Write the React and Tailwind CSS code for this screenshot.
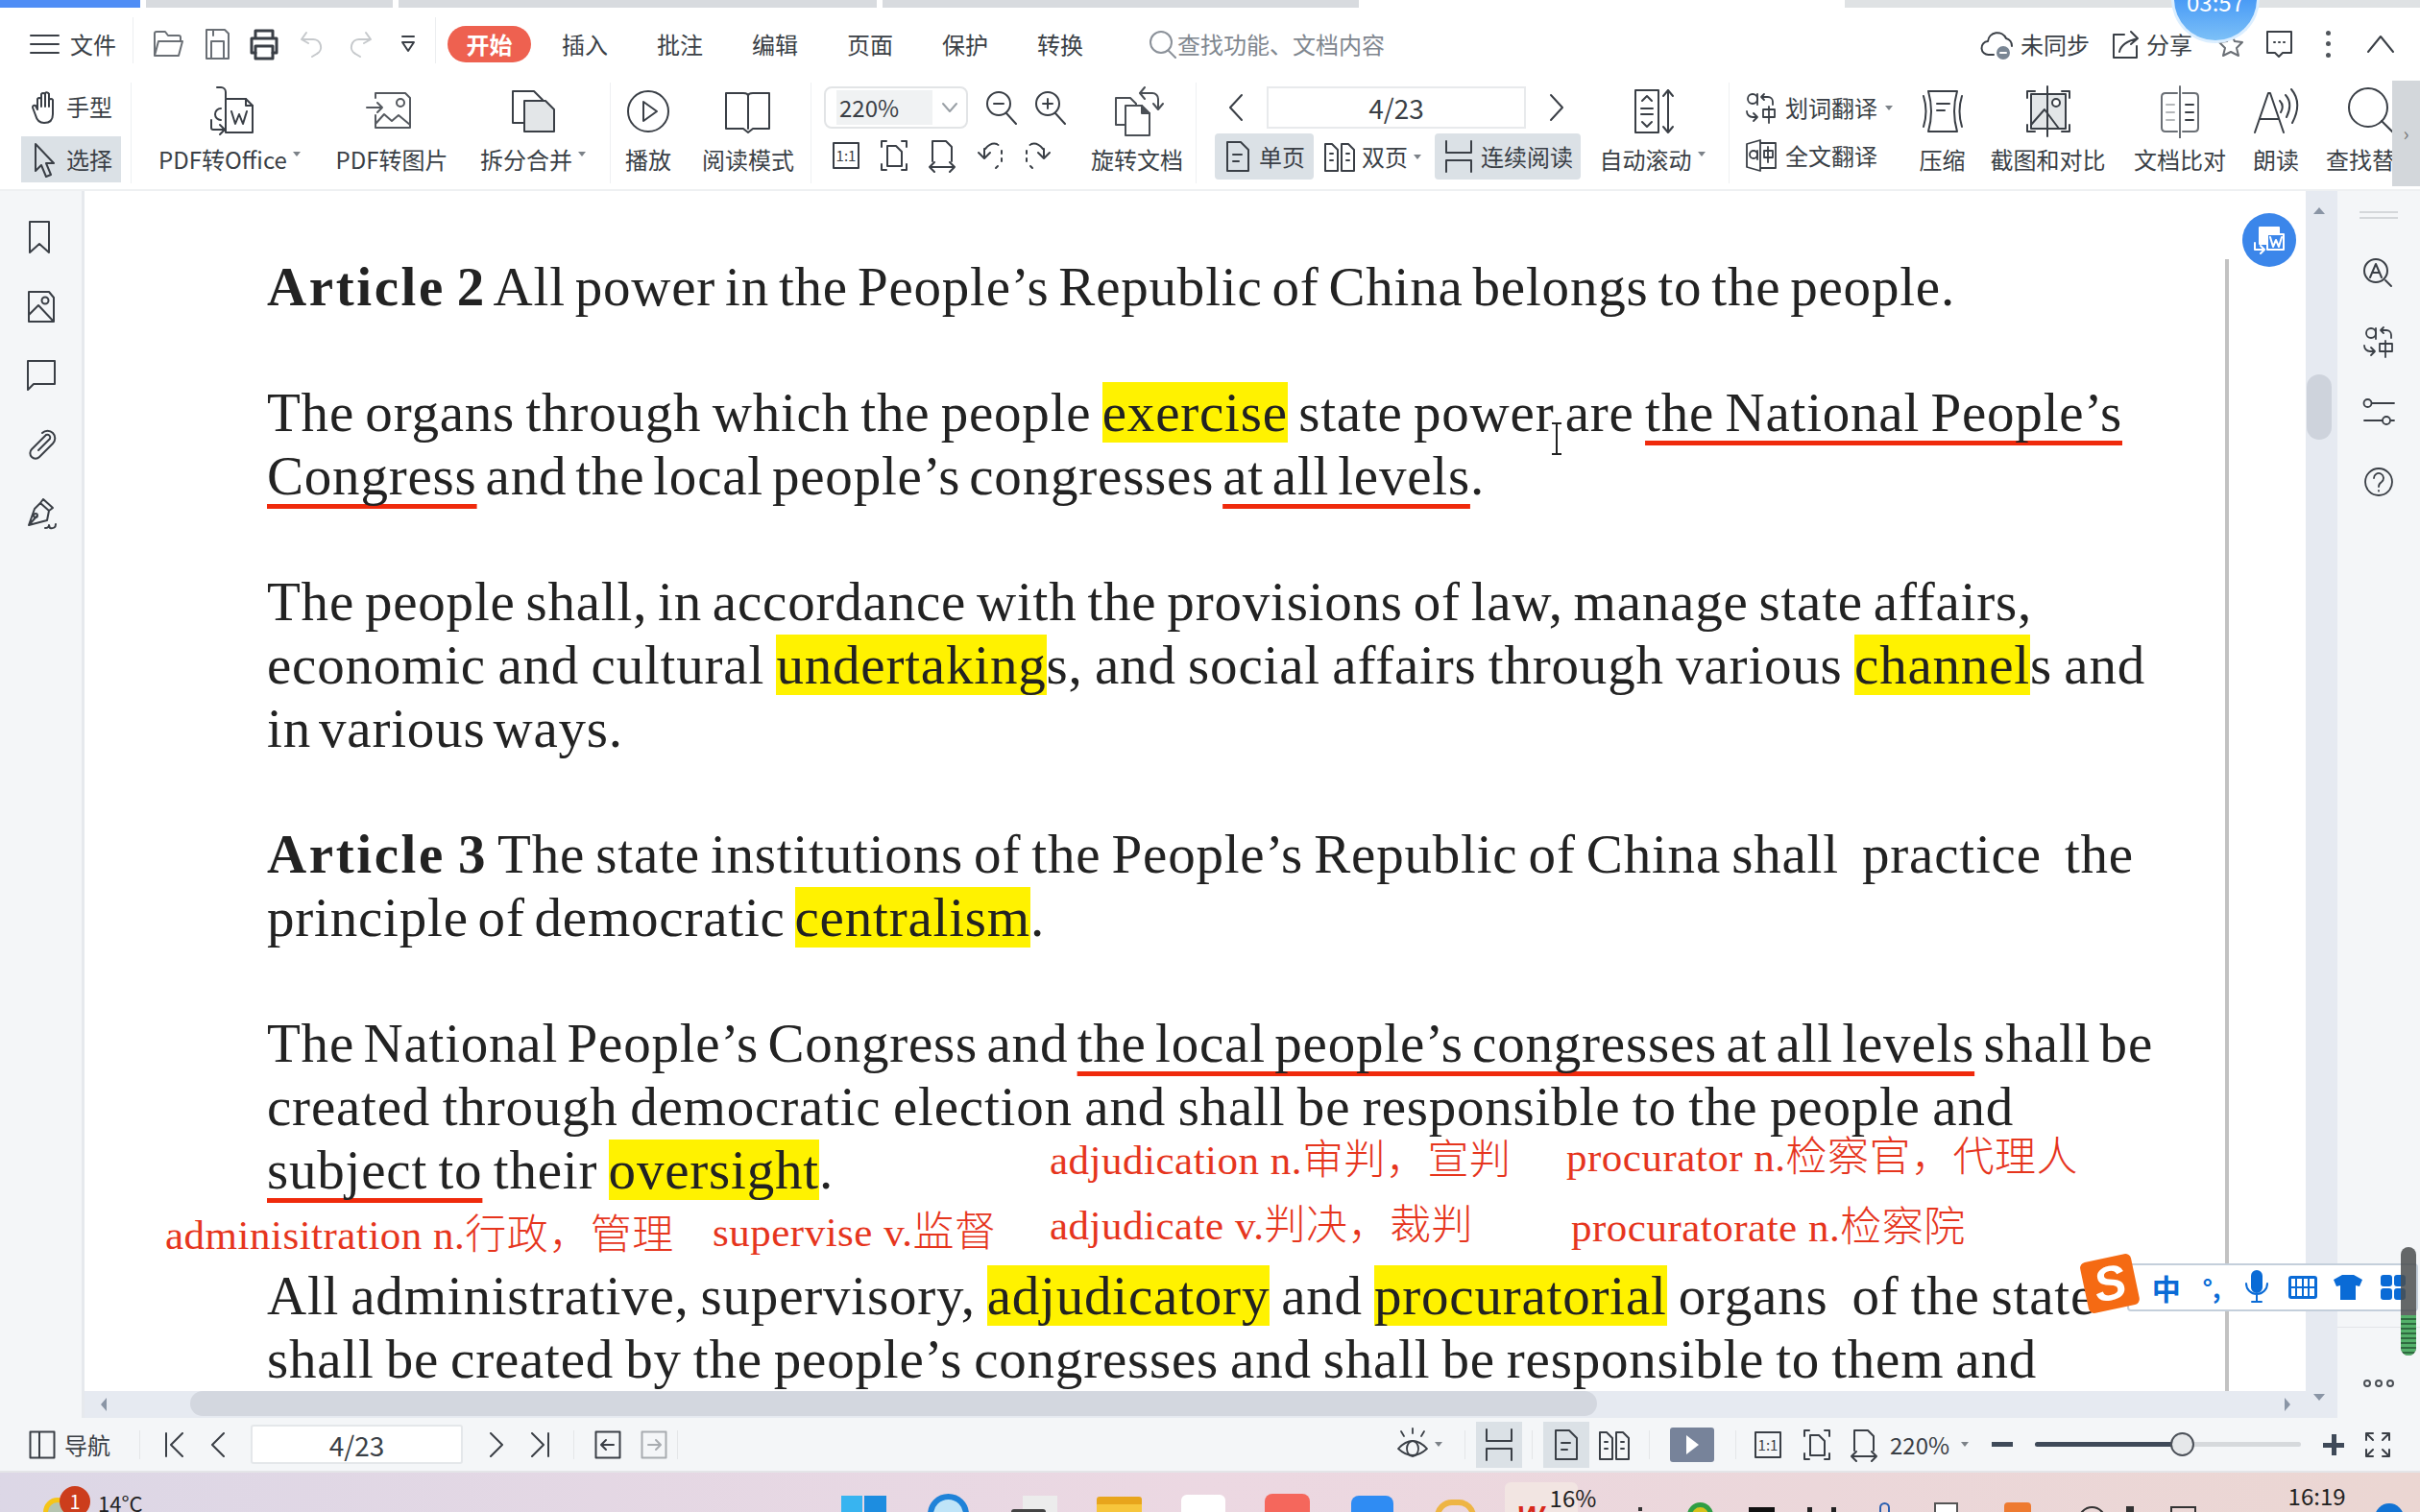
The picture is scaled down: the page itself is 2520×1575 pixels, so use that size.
import React from "react";

const ink = "#3a3f46";

const Ico = ({ w = 32, h = 32, sw = 2, color = ink, className = "", children }) => (
  <svg width={w} height={h} viewBox={`0 0 ${w} ${h}`} fill="none" stroke={color} strokeWidth={sw} strokeLinejoin="round" strokeLinecap="round" className={`shrink-0 ${className}`}>
    {children}
  </svg>
);

const Caret = ({ className = "" }) => (
  <span className={`inline-block w-0 h-0 border-x-[4px] border-x-transparent border-t-[5px] border-t-[#7c8288] ${className}`} />
);

const Divider = ({ className = "" }) => <div className={`w-px h-[105px] bg-[#eef0f2] shrink-0 ${className}`} />;

const SingleIcon = () => (
  <Ico w={28} h={34}><path d="M3 2h14l8 8v22H3z" /><path d="M9 15h9M9 22h6" /></Ico>
);
const DoubleIcon = () => (
  <Ico w={34} h={34}><path d="M2 4h7l6 6v22H2z" /><path d="M19 4h7l6 6v22H19z" /><path d="M7 14h3M7 21h3M24 14h3M24 21h3" /></Ico>
);
const ContinuousIcon = () => (
  <Ico w={30} h={34}><path d="M2 1v12h26V1M2 33V21h26v12" /></Ico>
);
const OneOne = () => (
  <Ico w={30} h={30}><rect x="2" y="2" width="26" height="26" /><text x="15" y="21" fontSize="15" textAnchor="middle" fill={ink} stroke="none" fontFamily="Noto Sans CJK SC">1:1</text></Ico>
);
const FitPage = () => (
  <Ico w={30} h={34}><path d="M2 8V2h5M23 2h5v6M2 26v6h5M23 32h5v-6" /><path d="M8 7h9l6 6v15H8z" /></Ico>
);
const FitWidth = () => (
  <Ico w={30} h={36}><path d="M5 24V3h14l6 6v15" /><path d="M2 30h26M7 25l-5 5 5 5M23 25l5 5-5 5" /></Ico>
);

// big toolbar icons, 56x56
const icons = {
  office: (
    <>
      <path d="M24 15h21l7 7v28H24z" /><path d="M45 15v7h7" /><path d="M30 28l4 13 4-10 4 10 4-13" />
      <path d="M15 3h4a5 5 0 0 1 5 5v6M19 25a6 6 0 0 0-6 6 6 6 0 0 0 6 6" /><path d="M9 37v8a2 2 0 0 0 2 2h11M18 42l5 5-5 5" />
    </>
  ),
  image: (
    <g stroke="#55595f">
      <path d="M11 14V9h31l5 5v31H11V32" /><path d="M2 24h16M13 19l5 5-5 5" /><circle cx="37" cy="19" r="4" /><path d="M11 41l9-10 8 7 7-6 12 10" />
    </g>
  ),
  split: (
    <>
      <path d="M7 7h22l9 9v24H7z" /><path d="M19 17h22l9 9v23H19z" fill="#e3e6e8" />
    </>
  ),
  play: (
    <>
      <circle cx="28" cy="28" r="21" /><path d="M23 18l14 10-14 10z" />
    </>
  ),
  book: <path d="M5 9h18q5 0 5 3q0-3 5-3h17v37H33l-5 4-5-4H5zM28 12v34" />,
  rotate: (
    <g stroke="#4a4f55">
      <path d="M8 16h15l6 6v22H8z" transform="translate(-2 -2)" /><path d="M16 22h17l8 8v23H16z" fill="#fff" /><path d="M33 22v8h8" fill="#4a4f55" />
      <path d="M32 9h12a6 6 0 0 1 6 6v10M36 3l-5 6 5 6M45 20l5 6 5-6" />
    </g>
  ),
  scroll: (
    <>
      <rect x="10" y="6" width="24" height="44" /><path d="M17 17l5-5 5 5M17 39l5 5 5-5M16 25h12M16 31h12" /><path d="M44 6v44M39 12l5-6 5 6M39 44l5 6 5-6" />
    </>
  ),
  compress: (
    <>
      <path d="M13 7h30q-6 21 0 42H13q6-21 0-42z" /><path d="M22 20h13M22 27h8" /><path d="M8 12q5 16 0 32M48 12q-5 16 0 32" />
    </>
  ),
  shot: (
    <>
      <path d="M6 14V7h8M42 7h8v7M6 42v7h8M42 49h8v-7" /><rect x="10" y="10" width="36" height="36" fill="#e3e6e8" /><circle cx="36" cy="19" r="4" fill="#fff" />
      <path d="M10 42l14-16 15 20" /><path d="M27 2v52" />
    </>
  ),
  compare: (
    <>
      <path d="M25 9H13q-4 0-4 4v32q0 4 4 4h12M31 9h12q4 0 4 4v32q0 4-4 4H31" stroke="#6a6f75" /><path d="M28 2v54" stroke="#6a6f75" />
      <path d="M14 21h8M14 29h8M14 37h8" stroke="#b4b7ba" /><path d="M34 21h8M34 29h8M34 37h8" />
    </>
  ),
  read: (
    <>
      <path d="M6 50L20 9h2l14 41M11 36h20" /><path d="M32 17q5 5 1 12M38 11q8 9 1 23M44 5q12 14 1 35" />
    </>
  ),
  find: (
    <>
      <circle cx="24" cy="24" r="20" /><path d="M38 38l14 14" />
    </>
  ),
};

const BigTool = ({ w, icon, label, caret }) => (
  <div className={`${w} shrink-0 flex flex-col items-center pt-[2px]`}>
    <div className="h-[56px] flex items-center justify-center">
      <Ico w={56} h={56}>{icons[icon]}</Ico>
    </div>
    <div className="h-[44px] flex items-center gap-[6px] text-[24px] text-[#3a3f46] whitespace-nowrap">
      {label}
      {caret && <Caret className="-mt-3" />}
    </div>
  </div>
);

const Hl = ({ children }) => <span className="bg-[#fff200]">{children}</span>;
const Ul = ({ children }) => (
  <span className="underline decoration-[#ef2a0c] decoration-[5px] underline-offset-[10px] [text-decoration-skip-ink:none]">{children}</span>
);
const Art = ({ children }) => <b className="tracking-[2.6px]">{children}</b>;
// the page has a few wider gaps where the justified text was stretched
const Gap = () => <span className="inline-block w-[13px]" />;

const Line = ({ w, children }) => (
  <div className={`${w} h-[65.7px] leading-[65.7px] whitespace-nowrap [text-align-last:justify]`}>{children}</div>
);
const Blank = () => <div className="h-[65.7px]" />;

const Note = ({ className, children }) => (
  <div className={`absolute whitespace-nowrap text-[43px] leading-[50px] tracking-[0.5px] font-light text-[#e6351d] font-['Liberation_Serif','Noto_Sans_CJK_SC',serif] ${className}`}>{children}</div>
);

const Tile = ({ className = "", children }) => <div className={`shrink-0 ${className}`}>{children}</div>;

export default function App() {
  return (
    <div className="relative w-[2520px] h-[1575px] overflow-hidden bg-white flex flex-col font-['Noto_Sans_CJK_SC',sans-serif] text-[#3a3f46]">
      {/* title tabs */}
      <div className="h-2 flex shrink-0">
        <div className="w-[146px] bg-[#4f8df5]" />
        <div className="w-[257px] ml-[6px] bg-[#d8dbdf]" />
        <div className="w-[498px] ml-[6px] bg-[#d8dbdf]" />
        <div className="w-[496px] ml-[6px] bg-[#d8dbdf]" />
        <div className="w-[599px] ml-[506px] bg-[#dfe2e4]" />
      </div>

      {/* menu row */}
      <div className="h-[78px] pb-[3px] flex items-center shrink-0 text-[24px]">
        <Ico w={32} h={24} className="ml-[31px]"><path d="M1 3h29M1 12h29M1 21h29" /></Ico>
        <span className="ml-[10px]">文件</span>
        <div className="w-px h-[48px] bg-[#eceef0] ml-[17px] -mt-2" />
        <Ico w={34} h={34} color="#6a6f75" className="ml-[19px]"><path d="M3 29V6q0-2 2-2h9l3 4h11q2 0 2 2v4M3 29l4-15h25l-4 15z" /></Ico>
        <Ico w={30} h={34} color="#6a6f75" className="ml-[19px]"><path d="M4 2h19l4 4v26H4z" /><path d="M9 14h13v18H9zM11 2v6" /></Ico>
        <Ico w={32} h={34} sw={3} className="ml-[18px]"><path d="M7 11V3h18v8M7 26H3V11h26v15h-4" /><rect x="7" y="19" width="18" height="13" /></Ico>
        <Ico w={26} h={30} color="#c6c9cc" className="ml-[21px]"><path d="M7 3L2 10l7 4M3 10h11a8 8 0 0 1 4 15l-5 3" /></Ico>
        <Ico w={26} h={30} color="#c6c9cc" className="ml-[24px]"><path d="M19 3l5 7-7 4M23 10H12a8 8 0 0 0-4 15l5 3" /></Ico>
        <Ico w={16} h={20} className="ml-[29px]"><path d="M2 2h12" /><path d="M2 8l6 9 6-9z" /></Ico>
        <div className="w-px h-[48px] bg-[#eceef0] ml-[20px] -mt-2" />
        <div className="ml-[12px] w-[87px] h-[38px] rounded-[19px] bg-[#ee6150] text-white font-bold flex items-center justify-center">开始</div>
        <span className="ml-[32px] whitespace-nowrap">插入</span>
        <span className="ml-[51px] whitespace-nowrap">批注</span>
        <span className="ml-[51px] whitespace-nowrap">编辑</span>
        <span className="ml-[51px] whitespace-nowrap">页面</span>
        <span className="ml-[51px] whitespace-nowrap">保护</span>
        <span className="ml-[51px] whitespace-nowrap">转换</span>
        <Ico w={30} h={30} color="#8b9199" className="ml-[68px]"><circle cx="13" cy="13" r="11" /><path d="M21 22l7 7" /></Ico>
        <span className="text-[#7f878f] whitespace-nowrap">查找功能、文档内容</span>
        <div className="flex-1" />
        <Ico w={36} h={36}>
          <path d="M14 29H9a7 7 0 0 1-1-14 10 10 0 0 1 19-3 8 8 0 0 1 6 8" />
          <circle cx="24" cy="27" r="8" fill="#7a8694" stroke="#fff" /><path d="M21 27h6" stroke="#fff" />
        </Ico>
        <span className="ml-[6px] whitespace-nowrap">未同步</span>
        <Ico w={30} h={32} className="ml-[22px]"><path d="M14 6H3v24h24V18M9 24q2-10 19-14M21 3l7 7-7 6" /></Ico>
        <span className="ml-[7px] whitespace-nowrap">分享</span>
        <Ico w={28} h={26} color="#6a6f75" className="ml-[26px]"><path d="M14 2l4 8 8 1-6 6 2 8-8-4-8 4 2-8-6-6 8-1z" /></Ico>
        <Ico w={28} h={32} className="ml-[22px]"><path d="M2 3h25v22h-9l-4 4-4-4H2z" /><path d="M9 14h1M14 14h1M19 14h1" /></Ico>
        <div className="ml-[35px] w-[4px] h-[28px] flex flex-col justify-between">
          <div className="w-[5px] h-[5px] rounded-full bg-[#50555b]" />
          <div className="w-[5px] h-[5px] rounded-full bg-[#50555b]" />
          <div className="w-[5px] h-[5px] rounded-full bg-[#50555b]" />
        </div>
        <Ico w={30} h={20} className="ml-[38px] mr-[26px]"><path d="M2 18L15 2l13 16" /></Ico>
      </div>

      {/* ribbon */}
      <div className="h-[111px] flex items-start shrink-0 border-b-2 border-[#eef0f2] box-content">
        <div className="w-[136px] shrink-0 pl-[22px] text-[24px]">
          <div className="h-[50px] flex items-center pl-[10px]">
            <Ico w={28} h={38}><path d="M7 22V11a2.500 2.500 0 0 1 4 0V6a2.500 2.500 0 0 1 4 0v-1a2.500 2.500 0 0 1 4 1v6a2.500 2.500 0 0 1 4 0v15q0 9-9 9-7 0-9-8l-3-8q0-3 3-2z" /><path d="M11 11v8M15 6v13M19 6v13" /></Ico>
            <span className="ml-[9px] whitespace-nowrap">手型</span>
          </div>
          <div className="w-[104px] h-[48px] mt-[6px] bg-[#dbe1e6] flex items-center pl-[12px]">
            <Ico w={26} h={38}><path d="M3 3l19 20h-8l5 12-5 2-5-12-6 6z" /></Ico>
            <span className="ml-[9px] whitespace-nowrap">选择</span>
          </div>
        </div>
        <Divider />
        <BigTool w="w-[204px]" icon="office" label="PDF转Office" caret />
        <BigTool w="w-[134px]" icon="image" label="PDF转图片" />
        <BigTool w="w-[160px]" icon="split" label="拆分合并" caret />
        <Divider />
        <BigTool w="w-[78px]" icon="play" label="播放" />
        <BigTool w="w-[130px]" icon="book" label="阅读模式" />
        <Divider />

        <div className="w-[283px] shrink-0 pl-[13px]">
          <div className="h-[44px] mt-[4px] flex items-center">
            <div className="w-[150px] h-[44px] border-2 border-[#e2e4e6] rounded-[8px] flex items-center">
              <div className="w-[100px] h-[36px] ml-[11px] pl-[3px] bg-[#f0f2f3] text-[24px] flex items-center">220%</div>
              <Ico w={18} h={12} color="#9aa0a6" className="ml-[9px]"><path d="M2 2l7 8 7-8" /></Ico>
            </div>
            <Ico w={36} h={36} className="ml-[17px]"><circle cx="15" cy="14" r="12" /><path d="M10 14h10M23 24l10 11" /></Ico>
            <Ico w={36} h={36} className="ml-[15px]"><circle cx="15" cy="14" r="12" /><path d="M10 14h10M15 9v10M23 24l10 11" /></Ico>
          </div>
          <div className="h-[44px] mt-[6px] flex items-center -ml-[2px]">
            <div className="w-[50px] flex justify-center"><OneOne /></div>
            <div className="w-[50px] flex justify-center"><FitPage /></div>
            <div className="w-[50px] flex justify-center"><FitWidth /></div>
            <div className="w-[50px] flex justify-center">
              <Ico w={30} h={34}><path d="M10 10q6-7 12-5M22 5l1.500 1M27 12v3M27 20v3M23 28l-2 2M9 10v9M3 14l6 6 6-6" /></Ico>
            </div>
            <div className="w-[50px] flex justify-center">
              <Ico w={30} h={34}><path d="M20 10q-6-7-12-5M8 5L6.500 6M3 12v3M3 20v3M7 28l2 2M21 10v9M15 14l6 6 6-6" /></Ico>
            </div>
          </div>
        </div>
        <BigTool w="w-[112px]" icon="rotate" label="旋转文档" />
        <Divider className="ml-[5px]" />

        <div className="w-[400px] shrink-0">
          <div className="h-[44px] mt-[4px] flex items-center">
            <Ico w={20} h={32} className="ml-[31px]"><path d="M16 3L4 16l12 13" /></Ico>
            <div className="w-[270px] h-[44px] ml-[22px] border-2 border-[#e8eaec] text-[28px] flex items-center justify-center">4/23</div>
            <Ico w={20} h={32} className="ml-[22px]"><path d="M4 3l12 13L4 29" /></Ico>
          </div>
          <div className="h-[48px] mt-[5px] flex items-center text-[24px]">
            <div className="w-[103px] h-[48px] ml-[19px] bg-[#dbe1e6] rounded-[4px] flex items-center pl-[10px] gap-[8px]"><SingleIcon /><span className="whitespace-nowrap">单页</span></div>
            <div className="w-[111px] h-[48px] ml-[8px] flex items-center pl-[2px] gap-[6px]"><DoubleIcon /><span className="whitespace-nowrap">双页</span><Caret /></div>
            <div className="w-[152px] h-[48px] ml-[7px] bg-[#dbe1e6] rounded-[4px] flex items-center pl-[10px] gap-[8px]"><ContinuousIcon /><span className="whitespace-nowrap">连续阅读</span></div>
          </div>
        </div>
        <BigTool w="w-[149px]" icon="scroll" label="自动滚动" caret />
        <Divider className="ml-[5px]" />

        <div className="w-[184px] shrink-0 pl-[16px] text-[24px]">
          <div className="h-[44px] mt-[4px] flex items-center">
            <Ico w={34} h={36} sw={1.8}>
              <circle cx="8" cy="9" r="5" /><path d="M13 4v11M20 4l-3 3 3 3M17 7h7a5 5 0 0 1 5 5v3" /><path d="M2 22a6 6 0 0 0 6 6h5M9 24l4 4-4 4" /><rect x="19" y="20" width="12" height="8" /><path d="M25 17v17" />
            </Ico>
            <span className="ml-[8px] whitespace-nowrap">划词翻译</span>
            <Caret className="ml-[8px]" />
          </div>
          <div className="h-[44px] mt-[6px] flex items-center">
            <Ico w={34} h={36} sw={1.8}>
              <path d="M16 2L2 6v24l14 4zM16 5h16v26H16" /><circle cx="9" cy="17" r="4" /><path d="M13 13v9" /><rect x="20" y="13" width="9" height="7" /><path d="M24 9v16" />
            </Ico>
            <span className="ml-[8px] whitespace-nowrap">全文翻译</span>
          </div>
        </div>
        <BigTool w="w-[75px]" icon="compress" label="压缩" />
        <BigTool w="w-[145px]" icon="shot" label="截图和对比" />
        <BigTool w="w-[130px]" icon="compare" label="文档比对" />
        <BigTool w="w-[70px]" icon="read" label="朗读" />
        <div className="w-[86px] shrink-0 overflow-hidden">
          <div className="w-[130px]"><BigTool w="w-[130px]" icon="find" label="查找替换" /></div>
        </div>
        <div className="w-[29px] h-[110px] bg-[#d3d7db] flex items-center justify-center text-[20px] text-[#777] -mt-[2px]">›</div>
      </div>

      {/* main */}
      <div className="flex-1 min-h-0 flex">
        <div className="w-[88px] shrink-0 bg-[#f4f6f8] border-r-[3px] border-[#e6e9ed] flex flex-col items-center pt-[30px] gap-[36px]">
          <Ico w={26} h={36} className="-ml-1"><path d="M3 2h20v32l-10-9-10 9z" /></Ico>
          <Ico w={32} h={36}><path d="M3 3h21l5 6v25H3z" /><circle cx="20" cy="12" r="3.500" /><path d="M3 27l10-10 15 16" /></Ico>
          <Ico w={34} h={36}><path d="M3 3h28v24H9l-6 6z" /></Ico>
          <Ico w={34} h={36}><path d="M14 24L26 12a3 3 0 0 0-4-4L7 23a5.500 5.500 0 0 0 8 8L29 17a7.500 7.500 0 0 0-11-11" /></Ico>
          <Ico w={34} h={36}><path d="M16 7l9 8-2 10-19 5 6-17zM19 3l-3 4 9 8 4-3zM4 30l8-9" /><circle cx="11" cy="20" r="2" /><path d="M21 33q4 0 4-3l1 3q6 1 6-4" /></Ico>
        </div>

        <div className="w-[2313px] shrink-0 flex flex-col">
          <div className="relative flex-1 min-h-0 overflow-hidden pl-[190px] pt-[67px] bg-white text-[#222] text-[57px] tracking-[0.8px] [word-spacing:-7px] font-['Liberation_Serif',serif]">
            <div className="absolute left-[2229px] top-[71px] bottom-0 w-[4px] bg-[#c2c2c2]" />
            <Line w="w-[1758px]"><Art>Article 2</Art> All power in the People’s Republic of China belongs to the people.</Line>
            <Blank />
            <Line w="w-[1932px]">The organs through which the people <Hl>exercise</Hl> state power are <Ul>the National People’s</Ul></Line>
            <Line w="w-[1268px]"><Ul>Congress</Ul> and the local people’s congresses <Ul>at all levels</Ul>.</Line>
            <Blank />
            <Line w="w-[1838px]">The people shall, in accordance with the provisions of law, manage state affairs,</Line>
            <Line w="w-[1956px]">economic and cultural <Hl>undertaking</Hl>s, and social affairs through various <Hl>channel</Hl>s and</Line>
            <Line w="w-[370px]">in various ways.</Line>
            <Blank />
            <Line w="w-[1944px]"><Art>Article 3</Art> The state institutions of the People’s Republic of China shall <Gap />practice <Gap />the</Line>
            <Line w="w-[810px]">principle of democratic <Hl>centralism</Hl>.</Line>
            <Blank />
            <Line w="w-[1964px]">The National People’s Congress and <Ul>the local people’s congresses at all levels</Ul> shall be</Line>
            <Line w="w-[1819px]">created through democratic election and shall be responsible to the people and</Line>
            <Line w="w-[590px]"><Ul>subject to</Ul> their <Hl>oversight</Hl>.</Line>
            <Blank />
            <Line w="w-[1904px]">All administrative, supervisory, <Hl>adjudicatory</Hl> and <Hl>procuratorial</Hl> organs <Gap />of the state</Line>
            <Line w="w-[1843px]">shall be created by the people’s congresses and shall be responsible to them and</Line>

            <div className="absolute left-[2247px] top-[23px] w-[56px] h-[56px] rounded-full bg-[#3b86ea] flex items-center justify-center">
              <Ico w={34} h={30} color="#fff" sw={2}>
                <path d="M7 2h20v6H14v11H7z" fill="#fff" /><rect x="15" y="9" width="17" height="16" /><path d="M18 12l3 10 3-7 3 7 3-10" /><path d="M2 18v7h9M8 21l4 4-4 4" />
              </Ico>
            </div>

            <svg width="14" height="34" viewBox="0 0 14 34" fill="none" stroke="#222" strokeWidth="2" className="absolute left-[1526px] top-[241px]">
              <path d="M2 1h10M7 1v32M2 33h10" />
            </svg>
          </div>
          {/* horizontal scrollbar */}
          <div className="h-[28px] shrink-0 bg-[#e6eaf1] flex items-center">
            <div className="ml-[17px] w-0 h-0 border-y-[7px] border-y-transparent border-r-[6px] border-r-[#8a95a5]" />
            <div className="ml-[87px] w-[1465px] h-[26px] -mt-[2px] rounded-[13px] bg-[#d3d7df]" />
            <div className="ml-[716px] w-0 h-0 border-y-[7px] border-y-transparent border-l-[6px] border-l-[#8a95a5]" />
          </div>
        </div>

        <div className="w-[33px] shrink-0 bg-[#e6eaf1] flex flex-col items-center pt-[17px]">
          <div className="w-0 h-0 border-x-[6px] border-x-transparent border-b-[7px] border-b-[#8a95a5] -ml-[6px]" />
          <div className="w-[26px] h-[68px] mt-[167px] rounded-[13px] bg-[#ced3dc] -ml-[6px]" />
          <div className="flex-1" />
          <div className="w-0 h-0 border-x-[6px] border-x-transparent border-t-[7px] border-t-[#8a95a5] -ml-[6px] mb-[18px]" />
        </div>

        <div className="w-[86px] shrink-0 bg-[#f4f6f8] flex flex-col items-center pt-[21px]">
          <div className="w-[40px] h-[8px] border-y-2 border-[#d4d7da]" />
          <Ico w={34} h={34} className="mt-[40px]"><circle cx="14" cy="14" r="12" /><path d="M8 21l6-14 6 14M10 16h8" /><path d="M24 24l6 6" /></Ico>
          <Ico w={34} h={36} className="mt-[36px]" sw={1.8}>
            <circle cx="9" cy="9" r="5" /><path d="M14 4v11M22 3l-3 3 3 3M19 6h6a5 5 0 0 1 5 5v3" /><path d="M2 22a6 6 0 0 0 6 6h5M9 24l4 4-4 4" /><rect x="18" y="20" width="13" height="8" /><path d="M24 17v17" />
          </Ico>
          <Ico w={34} h={30} className="mt-[40px]" sw={1.8}><circle cx="5.500" cy="6" r="4" /><path d="M10 6h23M2 24h19M30 24h3" /><circle cx="25" cy="24" r="4" /></Ico>
          <Ico w={32} h={32} className="mt-[42px]" sw={1.8}><circle cx="16" cy="16" r="14" /><path d="M11 12a5 5 0 1 1 8 4q-3 2-3 5M16 25v.5" /></Ico>
          <div className="flex-1" />
          <div className="w-full h-px bg-[#e2e5e8] mb-[54px]" />
          <div className="flex gap-[4px] mb-[32px]">
            <div className="w-[8px] h-[8px] rounded-full border-2 border-[#4a4f55]" />
            <div className="w-[8px] h-[8px] rounded-full border-2 border-[#4a4f55]" />
            <div className="w-[8px] h-[8px] rounded-full border-2 border-[#4a4f55]" />
          </div>
        </div>
      </div>

      {/* status bar */}
      <div className="h-[57px] shrink-0 bg-[#f4f6f8] border-b-2 border-[#e4e5e8] flex items-center text-[24px]">
        <Ico w={28} h={30} className="ml-[30px]"><rect x="1.500" y="1.500" width="25" height="27" /><path d="M11 2v26" /></Ico>
        <span className="ml-[9px] whitespace-nowrap">导航</span>
        <div className="w-px h-[30px] bg-[#e4e6e8] ml-[30px]" />
        <Ico w={22} h={26} className="ml-[25px]"><path d="M2 1v24M19 1L7 13l12 12" /></Ico>
        <Ico w={16} h={26} className="ml-[26px]"><path d="M14 1L2 13l12 12" /></Ico>
        <div className="w-[221px] h-[41px] ml-[26px] bg-white border-2 border-[#e4e7ea] rounded-[3px] flex items-center justify-center text-[28px]">4/23</div>
        <Ico w={16} h={26} className="ml-[27px]"><path d="M2 1l12 12L2 25" /></Ico>
        <Ico w={22} h={26} className="ml-[26px]"><path d="M3 1l12 12L3 25M20 1v24" /></Ico>
        <div className="w-px h-[30px] bg-[#e4e6e8] ml-[24px]" />
        <Ico w={28} h={30} className="ml-[21px]"><rect x="1.500" y="1.500" width="25" height="27" /><path d="M20 15H8M12 10l-5 5 5 5" /></Ico>
        <Ico w={28} h={30} color="#a8acb0" className="ml-[20px]"><rect x="1.500" y="1.500" width="25" height="27" /><path d="M8 15h12M16 10l5 5-5 5" /></Ico>
        <div className="w-px h-[30px] bg-[#e4e6e8] ml-[10px]" />
        <Ico w={34} h={36} className="ml-[748px]" sw={1.8}><path d="M17 1v5M5 4l3 5M29 4l-3 5" /><path d="M2 22q15-16 30 0-15 14-30 0z" /><ellipse cx="17" cy="22" rx="6" ry="8" /></Ico>
        <Caret className="ml-[6px]" />
        <div className="w-px h-[30px] bg-[#e4e6e8] ml-[23px]" />
        <div className="w-[48px] h-[48px] ml-[11px] bg-[#dbe1e6] flex items-center justify-center"><ContinuousIcon /></div>
        <div className="w-px h-[30px] bg-[#e4e6e8] ml-[10px]" />
        <div className="w-[48px] h-[48px] ml-[11px] bg-[#dbe1e6] flex items-center justify-center"><SingleIcon /></div>
        <div className="ml-[9px]"><DoubleIcon /></div>
        <div className="w-px h-[30px] bg-[#e4e6e8] ml-[19px]" />
        <div className="w-[46px] h-[36px] ml-[21px] bg-[#77839a] rounded-[3px] flex items-center justify-center">
          <div className="w-0 h-0 border-y-[10px] border-y-transparent border-l-[13px] border-l-white" />
        </div>
        <div className="w-px h-[30px] bg-[#e4e6e8] ml-[22px]" />
        <div className="ml-[18px]"><OneOne /></div>
        <div className="ml-[21px]"><FitPage /></div>
        <div className="ml-[19px]"><FitWidth /></div>
        <span className="ml-[12px] whitespace-nowrap">220%</span>
        <Caret className="ml-[12px]" />
        <div className="w-[22px] h-[5px] ml-[24px] bg-[#3f4a59]" />
        <div className="relative w-[277px] h-[5px] ml-[23px] bg-[#d6d9dc] rounded-full">
          <div className="w-[152px] h-[5px] bg-[#3f4a59] rounded-l-full" />
          <div className="absolute left-[141px] -top-[10px] w-[25px] h-[25px] rounded-full bg-[#e6e8ea] border-2 border-[#4b5058]" />
        </div>
        <div className="relative w-[22px] h-[22px] ml-[23px]">
          <div className="absolute top-[9px] left-0 w-[22px] h-[5px] bg-[#3f4a59]" />
          <div className="absolute left-[9px] top-0 w-[5px] h-[22px] bg-[#3f4a59]" />
        </div>
        <Ico w={30} h={30} className="ml-[20px]"><path d="M3 10V3h7M3 3l7 7M27 10V3h-7M27 3l-7 7M3 20v7h7M3 27l7-7M27 20v7h-7M27 27l-7-7" /></Ico>
      </div>

      {/* taskbar, cut off by the screen edge */}
      <div className="h-[41px] shrink-0 flex items-start overflow-hidden bg-gradient-to-r from-[#dcd7e6] via-[#ecd8e2] to-[#ebd6d2] text-[#222]">
        <Tile className="relative ml-[45px] w-[49px] h-[41px]">
          <div className="absolute left-0 top-[26px] w-[30px] h-[30px] rounded-full border-[5px] border-[#f5c518] bg-[#b5c4b0]" />
          <div className="absolute left-[17px] top-[14px] w-[32px] h-[32px] rounded-full bg-[#cc3d1c] text-white text-[20px] flex items-center justify-center">1</div>
        </Tile>
        <span className="ml-[8px] mt-[18px] text-[22px] leading-[26px] whitespace-nowrap">14°C</span>
        <Tile className="ml-[727px] mt-[24px] w-[47px] grid grid-cols-2 gap-[2px]">
          <div className="h-[22px] bg-[#38b4f0]" /><div className="h-[22px] bg-[#1d8de0]" /><div className="h-[22px] bg-[#1d8de0]" /><div className="h-[22px] bg-[#0f6fcf]" />
        </Tile>
        <Tile className="ml-[43px] mt-[22px] w-[43px] h-[43px] rounded-full border-[6px] border-[#1f82d8] bg-[#bfe4f8]" />
        <Tile className="ml-[44px] mt-[24px] w-[48px] h-[40px] relative">
          <div className="absolute left-[12px] top-0 w-[36px] h-[40px] bg-[#ececec]" />
          <div className="absolute left-0 top-[14px] w-[36px] h-[26px] bg-[#444] rounded-[3px]" />
        </Tile>
        <Tile className="ml-[41px] mt-[25px] w-[47px] h-[30px] bg-[#f7c63c] rounded-[3px] border-t-[8px] border-[#e8a51c]" />
        <Tile className="ml-[41px] mt-[23px] w-[46px] h-[40px] bg-white rounded-[6px]" />
        <Tile className="ml-[41px] mt-[22px] w-[47px] h-[42px] bg-[#f5675c] rounded-[8px]" />
        <Tile className="ml-[43px] mt-[24px] w-[44px] h-[40px] bg-[#2f8cf3] rounded-[8px]" />
        <Tile className="ml-[43px] mt-[28px] w-[43px] h-[36px] rounded-full border-[6px] border-[#eeb544]" />
        <Tile className="relative ml-[30px] mt-[10px] w-[76px] h-[40px] bg-[#f2e5e2] rounded-t-[6px]">
          <div className="absolute left-[13px] top-[20px] font-bold italic text-[30px] leading-none text-[#d8291c] font-['Liberation_Sans',sans-serif]">W</div>
          <div className="absolute left-[47px] top-[1px] text-[24px] leading-[30px] whitespace-nowrap">16%</div>
        </Tile>
        <Tile className="ml-[63px] mt-[36px] w-[4px] h-[4px] bg-[#333]" />
        <Tile className="ml-[47px] mt-[31px] w-[27px] h-[27px] rounded-full bg-[#d8c21c] border-[5px] border-[#2f9e44]" />
        <Tile className="ml-[37px] mt-[36px] w-[27px] h-[20px] bg-[#111]" />
        <Tile className="ml-[34px] mt-[36px] w-[30px] h-[20px] border-x-[5px] border-[#222]" />
        <Tile className="ml-[45px] mt-[31px] w-[11px] h-[20px] rounded-t-full border-2 border-[#2a5fb0]" />
        <Tile className="ml-[46px] mt-[31px] w-[25px] h-[20px] border-2 border-[#555] bg-white" />
        <Tile className="ml-[48px] mt-[31px] w-[28px] h-[20px] bg-[#ee7a30] rounded-t-[4px]" />
        <Tile className="ml-[49px] mt-[35px] w-[29px] h-[29px] rounded-full border-2 border-[#333]" />
        <Tile className="ml-[21px] mt-[35px] w-[25px] h-[20px] border-l-[8px] border-[#333]" />
        <Tile className="ml-[21px] mt-[35px] w-[27px] h-[20px] border-2 border-[#333]" />
        <span className="ml-[96px] mt-[9px] text-[24px] leading-[30px] whitespace-nowrap">16:19</span>
        <Tile className="ml-[30px] mt-[32px] w-[30px] h-[30px] rounded-full bg-[#1273d4]" />
      </div>

      {/* handwritten notes on the page */}
      <Note className="left-[172px] top-[1262px]">adminisitration n.行政，管理</Note>
      <Note className="left-[742px] top-[1259px]">supervise v.监督</Note>
      <Note className="left-[1093px] top-[1184px]">adjudication n.审判，宣判</Note>
      <Note className="left-[1093px] top-[1252px]">adjudicate v.判决，裁判</Note>
      <Note className="left-[1631px] top-[1181px]">procurator n.检察官，代理人</Note>
      <Note className="left-[1636px] top-[1254px]">procuratorate n.检察院</Note>

      {/* timer bubble */}
      <div className="absolute left-[2261px] -top-[9px] w-[92px] h-[54px] rounded-b-[46px] bg-gradient-to-b from-[#3e93f5] to-[#7cc0f7] border-[3px] border-[#dbeeff] border-t-0 flex justify-center">
        <span className="text-white text-[24px] leading-[22px]">03:57</span>
      </div>

      {/* input method bar */}
      <div className="absolute left-[2215px] top-[1316px] w-[303px] h-[50px] bg-white border-2 border-[#c4cfdb] rounded-[4px] flex items-center pl-[15px]">
        <div className="w-[48px] flex justify-center text-[#0a6bd6] font-bold text-[30px] leading-none">中</div>
        <div className="w-[48px] flex justify-center text-[#0a6bd6] font-bold text-[26px] leading-none">°,</div>
        <div className="w-[48px] flex justify-center">
          <Ico w={26} h={36} color="#0a6bd6"><rect x="8" y="1" width="10" height="22" rx="5" fill="#0a6bd6" /><path d="M2 14a11 11 0 0 0 22 0M13 26v6M8 33h10" /></Ico>
        </div>
        <div className="w-[48px] flex justify-center">
          <div className="w-[30px] h-[24px] bg-[#0a6bd6] rounded-[3px] grid grid-cols-4 gap-[2px] p-[3px]">
            <div className="bg-white" /><div className="bg-white" /><div className="bg-white" /><div className="bg-white" />
            <div className="bg-white" /><div className="bg-white" /><div className="bg-white" /><div className="bg-white" />
          </div>
        </div>
        <div className="w-[48px] flex justify-center">
          <svg width="30" height="28" viewBox="0 0 30 28" fill="#0a6bd6"><path d="M9 1h12l9 5-3 7-4-1v15H7V12l-4 1-3-7z" /></svg>
        </div>
        <div className="w-[48px] flex justify-center">
          <div className="w-[26px] h-[26px] grid grid-cols-2 gap-[2px]">
            <div className="bg-[#0a6bd6] rounded-[3px]" /><div className="bg-[#0a6bd6] rounded-[3px]" /><div className="bg-[#0a6bd6] rounded-[3px]" /><div className="bg-[#0a6bd6] rounded-[3px]" />
          </div>
        </div>
      </div>
      <div className="absolute left-[2170px] top-[1310px] w-[54px] h-[54px] -rotate-[12deg] rounded-[6px] bg-[#f56a13] flex items-center justify-center text-white font-bold italic text-[50px] leading-none font-['Liberation_Sans',sans-serif]">S</div>
      <div className="absolute left-[2500px] top-[1299px] w-[16px] h-[113px] rounded-[8px] overflow-hidden bg-[#4a4d4f]/85 flex flex-col justify-end">
        <div className="h-[42px] bg-[repeating-linear-gradient(to_bottom,#54b06a_0,#54b06a_3px,#2f6b40_3px,#2f6b40_5px)]" />
      </div>
    </div>
  );
}
